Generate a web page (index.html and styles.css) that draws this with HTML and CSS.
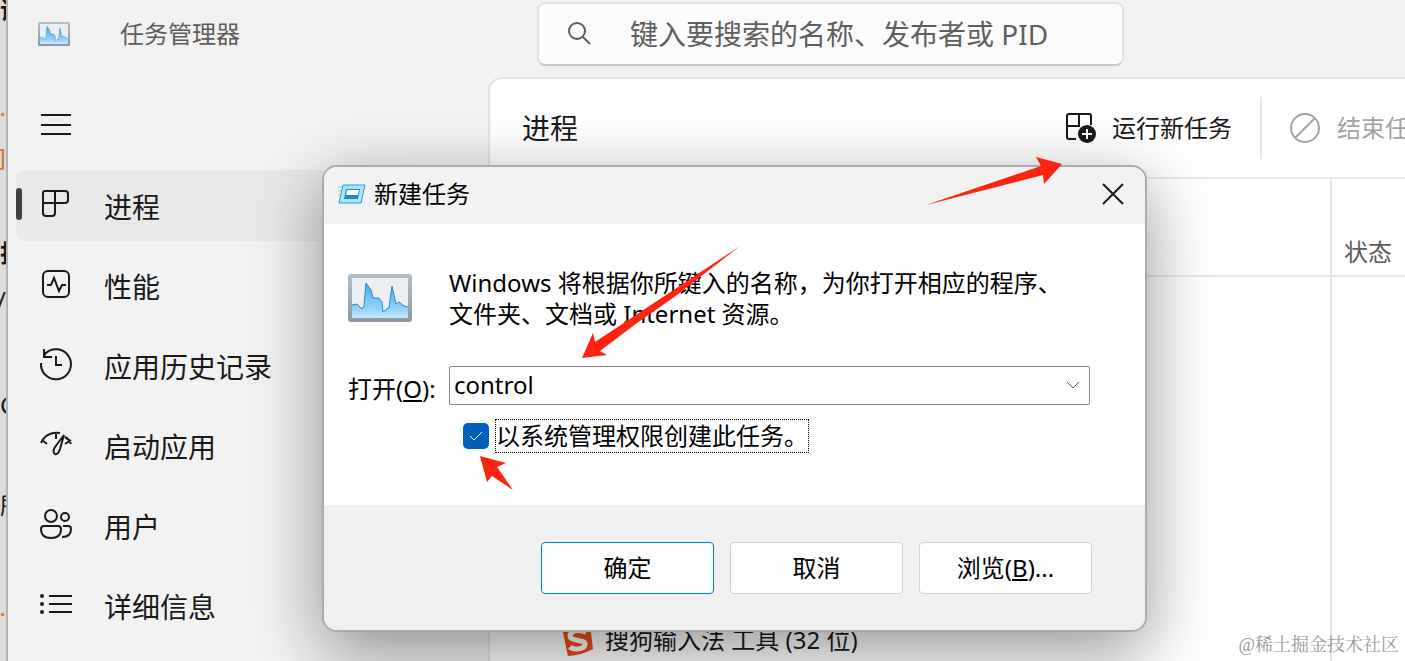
FILE: index.html
```
<!DOCTYPE html>
<html lang="zh-CN">

<head>
    <meta charset="UTF-8">
    <meta name="viewport" content="width=device-width, initial-scale=1.0">
    <title>任务管理器</title>
    <link rel="stylesheet" href="styles.css">
</head>

<body>
    <svg class="symbols" aria-hidden="true">
        <defs>
            <linearGradient id="chart-fill" x1="0" y1="0" x2="0" y2="1">
                <stop offset="0" stop-color="#45aee8" />
                <stop offset="0.7" stop-color="#8fd0fb" />
                <stop offset="1" stop-color="#c4e8ff" />
            </linearGradient>
            <linearGradient id="chart-frame" x1="0" y1="0" x2="0" y2="1">
                <stop offset="0" stop-color="#b3bec7" />
                <stop offset="1" stop-color="#8b98a3" />
            </linearGradient>
            <symbol id="monitor" viewBox="0 0 64 48">
                <rect width="64" height="48" rx="3" fill="url(#chart-frame)" />
                <rect x="4" y="4" width="56" height="40" fill="#eceef0" />
                <path d="M4 31l5-1 5 5 2-3 2-23 5 7 2 8h6l3 4 1 10 5-4 1 0 3-22 4 18 3-2 5 4 4 1v11H4z" fill="url(#chart-fill)" />
                <path d="M4 31l5-1 5 5 2-3 2-23 5 7 2 8h6l3 4 1 10 5-4 1 0 3-22 4 18 3-2 5 4 4 1" fill="none" stroke="#2b87c8" />
            </symbol>
        </defs>
    </svg>

    <div class="behind" aria-hidden="true">
        <b>议</b>
        <span class="orange">o.</span>
        <span class="orange">s]</span>
        <b>找</b>
        <span class="end">t,/</span>
        <span>C</span>
        <span>所</span>
        <span class="orange">o.</span>
    </div>

    <div class="window">
        <header class="titlebar">
            <div class="app-name">
                <svg class="app-icon"><use href="#monitor" /></svg>
                <span>任务管理器</span>
            </div>
            <label class="search">
                <svg class="search-icon" viewBox="0 0 24 24">
                    <circle cx="10" cy="9" r="8" />
                    <path d="M16 15l7 7" />
                </svg>
                <input type="text" placeholder="键入要搜索的名称、发布者或 PID" aria-label="搜索">
            </label>
        </header>

        <div class="content">
            <nav class="sidebar">
                <button class="menu-button" aria-label="菜单">
                    <svg class="nav-icon" viewBox="0 0 32 32"><path d="M1 6h30M1 16h30M1 25h30" /></svg>
                </button>
                <a class="nav-item active" href="#processes">
                    <svg class="nav-icon" viewBox="0 0 32 32"><path d="M5 3h20q3 0 3 3v6q0 3-3 3H3V5q0-2 2-2zM15 3v22q0 3-3 3H6q-3 0-3-3V15" /></svg>
                    <span>进程</span>
                </a>
                <a class="nav-item" href="#performance">
                    <svg class="nav-icon" viewBox="0 0 32 32"><rect x="3" y="3" width="26" height="26" rx="5" /><path d="M7 17h4l3-7 5 13 3-6h4" /></svg>
                    <span>性能</span>
                </a>
                <a class="nav-item" href="#history">
                    <svg class="nav-icon" viewBox="0 0 32 32"><path d="M1 15a15 15 0 1 0 4-9L4 9M4 1v8h8M16 8v9h6" /></svg>
                    <span>应用历史记录</span>
                </a>
                <a class="nav-item" href="#startup">
                    <svg class="nav-icon" viewBox="0 0 32 32"><path d="M1 15Q4 8 10 6q5-2 10-1M16 6v5M2 12l5 4M25 9q4 2 6 7M31 12l-6 4M24 7l-9 12q-3 5 0 7 3 1 5-5z" /></svg>
                    <span>启动应用</span>
                </a>
                <a class="nav-item" href="#users">
                    <svg class="nav-icon" viewBox="0 0 32 32"><circle cx="11" cy="8" r="6" /><circle cx="25" cy="9" r="4" /><path d="M4 18h14q3 0 3 3 0 9-10 9T1 21q0-3 3-3zM23 18h5q3 0 3 3 0 8-9 8" /></svg>
                    <span>用户</span>
                </a>
                <a class="nav-item" href="#details">
                    <svg class="nav-icon" viewBox="0 0 32 32"><path d="M9 8h23M9 16h23M9 24h23" /><g class="dots"><circle cx="2" cy="8" r="2" /><circle cx="2" cy="16" r="2" /><circle cx="2" cy="24" r="2" /></g></svg>
                    <span>详细信息</span>
                </a>
            </nav>

            <main class="panel">
                <div class="toolbar">
                    <h1>进程</h1>
                    <button class="tool">
                        <svg class="tool-icon" viewBox="0 0 32 32">
                            <path d="M12 27H5q-2 0-2-2V4q0-2 2-2h20q2 0 2 2v9M15 2v12H3" />
                            <circle class="solid" cx="23" cy="22" r="9" />
                            <path class="plus" d="M23 17v10M18 22h10" />
                        </svg>
                        <span>运行新任务</span>
                    </button>
                    <button class="tool end-task" disabled>
                        <svg class="tool-icon" viewBox="0 0 32 32"><circle cx="16" cy="16" r="14" /><path d="M26 6L6 26" /></svg>
                        <span>结束任务</span>
                    </button>
                </div>
                <table class="processes">
                    <thead>
                        <tr><th></th><th class="status">状态</th></tr>
                    </thead>
                    <tbody>
                        <tr><td></td><td></td></tr>
                        <tr><td></td><td></td></tr>
                        <tr><td></td><td></td></tr>
                        <tr><td></td><td></td></tr>
                        <tr><td></td><td></td></tr>
                        <tr><td></td><td></td></tr>
                        <tr>
                            <td>
                                <div class="process">
                                    <svg class="sogou" viewBox="0 0 32 32">
                                        <path d="M1 4q14 1 28-4l3 25q-11 6-25 7z" fill="#ee4d1b" />
                                        <path d="M25 8Q12 4 9 11c-1 7 15 4 15 9 0 6-12 6-15 3" fill="none" stroke="#fff" stroke-width="5" />
                                    </svg>
                                    <span>搜狗输入法 工具 (32 位)</span>
                                </div>
                            </td>
                            <td></td>
                        </tr>
                    </tbody>
                </table>
            </main>
        </div>
    </div>

    <form class="dialog" role="dialog" aria-labelledby="dialog-title">
        <div class="dialog-header">
            <svg class="run-icon" viewBox="0 0 28 20">
                <path d="M0 3h5M0 7h4M0 11h3" stroke="#7ccdf0" />
                <path d="M5 1h22l-4 18H1z" fill="#a9e4fb" stroke="#2b9bd6" />
                <path d="M8 5h14l-2 10H6z" fill="#188bc9" />
                <path d="M9 6h12l-1 5H8z" fill="#fff" />
            </svg>
            <h2 id="dialog-title">新建任务</h2>
            <button type="button" class="close" aria-label="关闭">
                <svg viewBox="0 0 20 20"><path d="M0 0l20 20M20 0L0 20" /></svg>
            </button>
        </div>
        <div class="dialog-body">
            <svg class="dialog-icon"><use href="#monitor" /></svg>
            <p>Windows 将根据你所键入的名称，为你打开相应的程序、文件夹、文档或 Internet 资源。</p>
            <label class="open-label" for="open">打开(<u>O</u>):</label>
            <select id="open">
                <option>control</option>
            </select>
            <div class="admin">
                <input type="checkbox" id="admin" checked>
                <label for="admin">以系统管理权限创建此任务。</label>
            </div>
        </div>
        <div class="dialog-footer">
            <button type="button" class="primary">确定</button>
            <button type="button">取消</button>
            <button type="button">浏览(<u>B</u>)...</button>
        </div>
    </form>

    <svg class="arrows" viewBox="0 0 1405 661" aria-hidden="true">
        <path d="M926 205L1041 166L1036 157L1062 164L1044 184L1043 175Z" />
        <path d="M740 246L595 342L593 333L582 358L607 355L600 351L637 323L677 295Z" />
        <path d="M480 456L506 463L497 467L513 490L492 476L487 482Z" />
    </svg>

    <div class="watermark">@稀土掘金技术社区</div>
</body>

</html>
```

FILE: styles.css
```
* {
    box-sizing: border-box;
}

body {
    display: flex;
    height: 100vh;
    margin: 0;
    overflow: hidden;
    background-color: #dcdcdc;
    color: #1a1a1a;
    font-family: "Noto Sans", "Noto Sans CJK SC", sans-serif;
    font-size: 24px;
    line-height: 32px;
}

button,
input,
select {
    font: inherit;
    color: inherit;
}

button {
    padding: 0;
    border: none;
    background: none;
}

h1,
h2,
p {
    margin: 0;
    font-weight: normal;
}

svg {
    flex: none;
}

.symbols {
    position: absolute;
    width: 0;
    height: 0;
}

/* strip of the editor behind the window */
.behind {
    display: grid;
    grid-template-columns: 100%;
    grid-template-rows: 26px 97px 50px 96px 47px 105px 100px 102px;
    align-items: end;
    flex: none;
    width: 6px;
    overflow: hidden;
    white-space: nowrap;
}

.behind .orange,
.behind .end {
    display: flex;
    justify-content: flex-end;
}

.behind .orange {
    color: #d9742f;
}

.window {
    display: flex;
    flex-direction: column;
    flex: 1;
    min-width: 0;
    border-left: 2px solid #b4b4b4;
    background-color: #f2f2f2;
}

.titlebar {
    display: flex;
    align-items: flex-start;
    flex: none;
    height: 77px;
    padding-top: 2px;
    background-color: #f1f1f1;
}

.app-name {
    display: flex;
    align-items: center;
    gap: 50px;
    width: 529px;
    height: 64px;
    padding-left: 30px;
    color: #5c5c5c;
}

.app-icon {
    width: 32px;
    height: 24px;
}

.search {
    display: flex;
    align-items: center;
    gap: 39px;
    width: 42%;
    height: 64px;
    padding-left: 28px;
    border: 2px solid #e2e2e2;
    border-bottom-color: #c8c8c8;
    border-radius: 8px;
    background-color: #fbfbfb;
}

.search-icon {
    width: 24px;
    height: 24px;
    fill: none;
    stroke: #5c5c5c;
    stroke-width: 2;
}

.search input {
    flex: 1;
    min-width: 0;
    padding: 0;
    border: none;
    outline: none;
    background: none;
    font-size: 28px;
}

.search input::placeholder {
    color: #5f5f5f;
}

.content {
    display: flex;
    flex: 1;
    min-height: 0;
}

.sidebar {
    display: flex;
    flex-direction: column;
    gap: 9px;
    flex: none;
    width: 480px;
    padding: 21px 8px 0;
}

.nav-icon {
    width: 32px;
    height: 32px;
    fill: none;
    stroke: #1a1a1a;
    stroke-width: 2;
    overflow: visible;
}

.dots {
    fill: #1a1a1a;
    stroke: none;
}

.menu-button {
    display: flex;
    align-items: center;
    height: 53px;
    margin-bottom: 10px;
    padding-left: 24px;
}

.nav-item {
    display: flex;
    align-items: flex-start;
    gap: 32px;
    flex: none;
    height: 71px;
    padding: 18px 0 0 24px;
    border-radius: 8px;
    color: #1a1a1a;
    font-size: 28px;
    line-height: 38px;
    text-decoration: none;
}

.nav-item.active {
    background-color: #e9e9e9;
}

.nav-item.active::before {
    content: "";
    width: 6px;
    height: 32px;
    margin: 0 -14px 0 -24px;
    border-radius: 3px;
    background-color: #3f4347;
}

.panel {
    flex: 1;
    min-width: 0;
    border-top: 2px solid #e3e3e3;
    border-left: 2px solid #e3e3e3;
    border-top-left-radius: 14px;
    background-color: #fff;
    overflow: hidden;
}

.toolbar {
    display: flex;
    align-items: center;
    height: 98px;
    padding-left: 32px;
    white-space: nowrap;
}

.toolbar h1 {
    flex: 1;
    font-size: 28px;
}

.tool {
    display: flex;
    align-items: center;
    gap: 16px;
    padding-right: 28px;
}

.tool-icon {
    width: 32px;
    height: 32px;
    fill: none;
    stroke: #1a1a1a;
    stroke-width: 2;
}

.tool-icon .solid {
    fill: #1a1a1a;
    stroke: none;
}

.tool-icon .plus {
    stroke: #fff;
}

.end-task {
    width: 145px;
    height: 62px;
    padding: 0 0 0 27px;
    border-left: 2px solid #e8e8e8;
    color: #a3a3a3;
    overflow: hidden;
}

.end-task .tool-icon {
    stroke: #a3a3a3;
}

.processes {
    width: 100%;
    border-collapse: collapse;
    table-layout: fixed;
}

.processes th {
    height: 98px;
    border-top: 2px solid #e8e8e8;
    border-bottom: 2px solid #e8e8e8;
    padding: 0 0 7px 12px;
    vertical-align: bottom;
    text-align: left;
    font-weight: normal;
    color: #5c5c5c;
}

.processes .status {
    width: 74px;
}

.processes th:last-child,
.processes td:last-child {
    border-left: 2px solid #e8e8e8;
}

.processes td {
    height: 56px;
    padding: 0;
}

.process {
    display: flex;
    align-items: center;
    gap: 12px;
    padding-left: 71px;
}

.sogou {
    width: 32px;
    height: 32px;
}

.dialog {
    position: absolute;
    top: 165px;
    left: 322px;
    width: 825px;
    border: 2px solid #ababab;
    border-radius: 15px;
    background-color: #fff;
    box-shadow: 0 20px 70px rgba(0, 0, 0, 0.42);
    color: #000;
    overflow: hidden;
}

.dialog-header {
    display: flex;
    align-items: center;
    gap: 8px;
    height: 57px;
    padding: 0 22px 4px 14px;
    background-color: #f2f2f2;
}

.dialog-header h2 {
    flex: 1;
    font-size: 24px;
}

.run-icon {
    width: 28px;
    height: 20px;
    fill: none;
}

.close svg {
    display: block;
    width: 20px;
    height: 20px;
    fill: none;
    stroke: #1a1a1a;
    stroke-width: 2;
    overflow: visible;
}

.dialog-body {
    display: grid;
    grid-template-columns: 101px 1fr;
    align-items: center;
    padding: 43px 55px 52px 24px;
}

.dialog-icon {
    width: 64px;
    height: 48px;
}

.dialog-body p {
    max-width: 620px;
    line-height: 31px;
}

.open-label {
    margin-top: 44px;
    white-space: nowrap;
}

.dialog-body select {
    width: 100%;
    height: 39px;
    margin-top: 36px;
    padding: 0 4px;
    border: 1px solid #868686;
    border-radius: 2px;
    appearance: none;
    background: #fff url("data:image/svg+xml,%3Csvg xmlns='http://www.w3.org/2000/svg' width='14' height='8'%3E%3Cpath d='M1 1l6 6 6-6' fill='none' stroke='%23555'/%3E%3C/svg%3E") no-repeat right 9px center;
}

.admin {
    display: flex;
    align-items: center;
    gap: 6px;
    grid-column: 2;
    margin-top: 14px;
    padding-left: 14px;
}

.admin input {
    width: 26px;
    height: 26px;
    margin: 0;
    border-radius: 5px;
    appearance: none;
    background: #005fb8 url("data:image/svg+xml,%3Csvg xmlns='http://www.w3.org/2000/svg' width='14' height='10'%3E%3Cpath d='M1 5l4 4 8-8' fill='none' stroke='white'/%3E%3C/svg%3E") no-repeat center;
}

.admin label {
    border: 1px dotted #000;
}

.dialog-footer {
    display: flex;
    justify-content: flex-end;
    gap: 16px;
    padding: 37px 53px 36px;
    background-color: #f0f0f0;
}

.dialog-footer button {
    width: 173px;
    height: 52px;
    border: 1px solid #d0d0d0;
    border-radius: 4px;
    background-color: #fdfdfd;
}

.dialog-footer .primary {
    border-color: #0078d4;
}

.arrows {
    position: absolute;
    top: 0;
    left: 0;
    width: 1405px;
    height: 661px;
    fill: #ff2412;
    pointer-events: none;
}

.watermark {
    position: absolute;
    right: 6px;
    bottom: 4px;
    color: #999;
    font-family: "Liberation Serif", "Noto Serif CJK SC", "Noto Sans CJK SC", serif;
    font-size: 18px;
    line-height: 24px;
}
```
